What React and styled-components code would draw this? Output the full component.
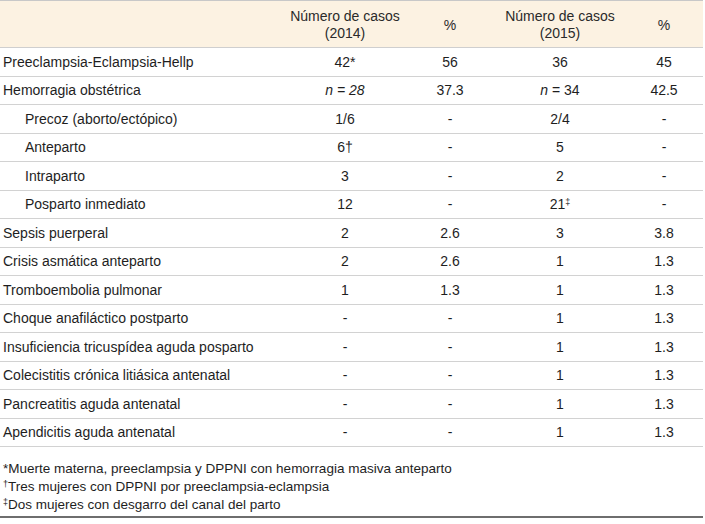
import React from "react";
import styled, { createGlobalStyle } from "styled-components";

const GlobalStyle = createGlobalStyle`
  html, body {
    margin: 0;
    padding: 0;
    background: #fff;
  }
  body {
    font-family: "Liberation Sans", Arial, sans-serif;
  }
`;

const rows = [
  { label: "Preeclampsia-Eclampsia-Hellp", a: "42*", b: "56", c: "36", d: "45" },
  { label: "Hemorragia obstétrica", a: <><i>n = 28</i></>, b: "37.3", c: <><i>n</i> = 34</>, d: "42.5" },
  { label: "Precoz (aborto/ectópico)", sub: true, a: "1/6", b: "-", c: "2/4", d: "-" },
  { label: "Anteparto", sub: true, a: "6†", b: "-", c: "5", d: "-" },
  { label: "Intraparto", sub: true, a: "3", b: "-", c: "2", d: "-" },
  { label: "Posparto inmediato", sub: true, a: "12", b: "-", c: <>21<Sup>‡</Sup></>, d: "-" },
  { label: "Sepsis puerperal", a: "2", b: "2.6", c: "3", d: "3.8" },
  { label: "Crisis asmática anteparto", a: "2", b: "2.6", c: "1", d: "1.3" },
  { label: "Tromboembolia pulmonar", a: "1", b: "1.3", c: "1", d: "1.3" },
  { label: "Choque anafiláctico postparto", a: "-", b: "-", c: "1", d: "1.3" },
  { label: "Insuficiencia tricuspídea aguda posparto", a: "-", b: "-", c: "1", d: "1.3" },
  { label: "Colecistitis crónica litiásica antenatal", a: "-", b: "-", c: "1", d: "1.3" },
  { label: "Pancreatitis aguda antenatal", a: "-", b: "-", c: "1", d: "1.3" },
  { label: "Apendicitis aguda antenatal", a: "-", b: "-", c: "1", d: "1.3" },
];

function Sup({ children }) {
  return <SupMark>{children}</SupMark>;
}

export default function App() {
  return (
    <>
      <GlobalStyle />
      <Wrapper>
        <Table>
          <colgroup>
            <col style={{ width: 285 }} />
            <col style={{ width: 120 }} />
            <col style={{ width: 90 }} />
            <col style={{ width: 130 }} />
            <col style={{ width: 78 }} />
          </colgroup>
          <thead>
            <HeadRow>
              <HeadCell />
              <HeadCell>Número de casos<br />(2014)</HeadCell>
              <HeadCell>%</HeadCell>
              <HeadCell>Número de casos<br />(2015)</HeadCell>
              <HeadCell>%</HeadCell>
            </HeadRow>
          </thead>
          <tbody>
            {rows.map((r, i) => (
              <Row key={i}>
                <LabelCell $sub={r.sub}>{r.label}</LabelCell>
                <Cell>{r.a}</Cell>
                <Cell>{r.b}</Cell>
                <Cell>{r.c}</Cell>
                <Cell>{r.d}</Cell>
              </Row>
            ))}
          </tbody>
        </Table>
        <Notes>
          <Note>*Muerte materna, preeclampsia y DPPNI con hemorragia masiva anteparto</Note>
          <Note><SupMark>†</SupMark>Tres mujeres con DPPNI por preeclampsia-eclampsia</Note>
          <Note><SupMark>‡</SupMark>Dos mujeres con desgarro del canal del parto</Note>
        </Notes>
      </Wrapper>
    </>
  );
}

const Wrapper = styled.div`
  width: 703px;
  color: #1e1e1e;
  font-size: 14px;
  border-bottom: 2px solid #6e6e6e;
`;

const Table = styled.table`
  width: 703px;
  border-collapse: collapse;
  table-layout: fixed;
  border-top: 1px solid #c8c8c8;
`;

const HeadRow = styled.tr`
  background: #fcf2e2;
  height: 47px;
  border-bottom: 1px solid #cfcfcf;
`;

const HeadCell = styled.th`
  font-weight: normal;
  text-align: center;
  line-height: 17px;
  color: #2a2a2a;
  padding: 2px 0 0;
  vertical-align: middle;
`;

const Row = styled.tr`
  height: 28.5px;
  border-bottom: 1px solid #d2d2d2;
`;

const Cell = styled.td`
  text-align: center;
  padding: 0;
  vertical-align: middle;
  white-space: nowrap;
`;

const LabelCell = styled.td`
  text-align: left;
  padding: 0 0 0 ${(p) => (p.$sub ? "25px" : "3px")};
  vertical-align: middle;
  white-space: nowrap;
`;

const SupMark = styled.span`
  font-size: 9px;
  vertical-align: 4px;
  line-height: 0;
`;

const Notes = styled.div`
  padding: 13px 0 2px 3px;
  font-size: 13.5px;
`;

const Note = styled.div`
  line-height: 18px;
`;
